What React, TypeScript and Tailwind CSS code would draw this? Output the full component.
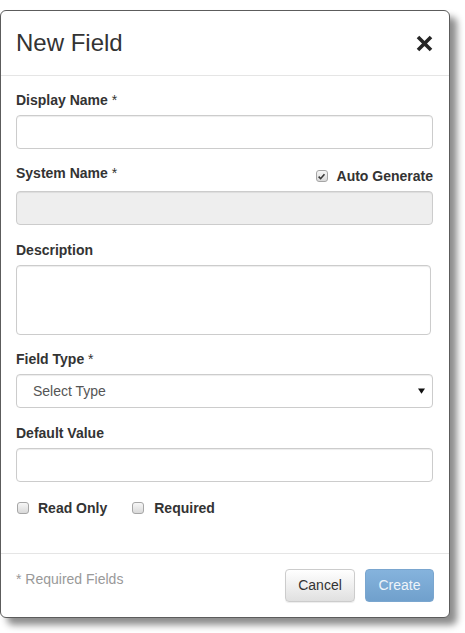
import React from "react";

const font = { fontFamily: '"Liberation Sans", Arial, sans-serif' };

function Box({ checked = false }: { checked?: boolean }) {
  return (
    <span className="relative inline-flex h-[12px] w-[12px] shrink-0 items-center justify-center rounded-[3px] border border-[#a6a6a6] bg-gradient-to-b from-[#f7f7f7] to-[#d9d9d9]">
      {checked && (
        <svg viewBox="0 0 10 10" className="h-[9px] w-[9px]">
          <path d="M1.8 5.2 L4 7.4 L8.3 2.4" fill="none" stroke="#3a3a3a" strokeWidth="1.8" />
        </svg>
      )}
    </span>
  );
}

function Label({ children, required = false }: { children: React.ReactNode; required?: boolean }) {
  return (
    <div className="mb-[5px] h-[20px] text-[14px] leading-[20px] font-bold text-[#333]">
      {children}
      {required && <span className="font-normal"> *</span>}
    </div>
  );
}

const inputBase =
  "block h-[34px] w-full rounded-[4px] border border-[#ccc] shadow-[inset_0_1px_1px_rgba(0,0,0,0.075)]";

export default function App() {
  return (
    <main className="min-h-screen bg-white pt-[10px]" style={font}>
      <div className="w-[450px] overflow-hidden rounded-[6px] border border-[#5c5c5c] bg-white shadow-[7px_7px_7px_rgba(0,0,0,0.45)]">
        {/* header */}
        <div className="flex h-[65px] items-center justify-between border-b border-[#e5e5e5] pr-[15px] pl-[15px]">
          <h1 className="text-[24px] leading-none text-[#333]">New Field</h1>
          <button className="flex h-[20px] w-[20px] items-center justify-center" aria-label="Close">
            <svg viewBox="0 0 17 17" className="h-[17px] w-[17px]">
              <path d="M2 2 L15 15 M15 2 L2 15" stroke="#262626" strokeWidth="3.6" />
            </svg>
          </button>
        </div>

        {/* body */}
        <div className="pt-[14px] pr-[16px] pb-[34px] pl-[15px] text-[#333]">
          <div className="mb-[15px]">
            <Label required>Display Name</Label>
            <input className={inputBase + " bg-white"} />
          </div>

          <div className="mb-[15px]">
            <div className="mb-[5px] flex h-[22px] items-start justify-between">
              <div className="h-[20px] text-[14px] leading-[18px] font-bold">
                System Name<span className="font-normal"> *</span>
              </div>
              <label className="mt-[3px] flex items-center gap-[9px] text-[14px] leading-[18px] font-bold">
                <Box checked />
                Auto Generate
              </label>
            </div>
            <input disabled className={inputBase + " bg-[#eeeeee]"} />
          </div>

          <div className="mb-[14px]">
            <Label>Description</Label>
            <textarea className="block h-[70px] w-[415px] resize-none rounded-[4px] border border-[#ccc] bg-white shadow-[inset_0_1px_1px_rgba(0,0,0,0.075)]" />
          </div>

          <div className="mb-[15px]">
            <Label required>Field Type</Label>
            <div className={inputBase + " flex items-center justify-between bg-white pr-[7px] pl-[16px]"}>
              <span className="text-[14px] text-[#555]">Select Type</span>
              <svg viewBox="0 0 8 6" className="h-[6px] w-[7px]">
                <path d="M0 0 H8 L4 6 Z" fill="#111" />
              </svg>
            </div>
          </div>

          <div className="mb-[15px]">
            <Label>Default Value</Label>
            <input className={inputBase + " bg-white"} />
          </div>

          <div className="flex h-[22px] items-center pl-[1px] text-[14px] font-bold">
            <label className="flex items-center gap-[9px]">
              <Box />
              Read Only
            </label>
            <label className="ml-[25px] flex items-center gap-[10px]">
              <Box />
              Required
            </label>
          </div>
        </div>

        {/* footer */}
        <div className="flex items-start justify-between border-t border-[#e5e5e5] pt-[15px] pr-[15px] pb-[15px] pl-[15px]">
          <span className="text-[14px] leading-[20px] text-[#999]">* Required Fields</span>
          <div className="flex gap-[10px]">
            <button className="h-[33px] w-[70px] rounded-[4px] border border-[#ccc] bg-gradient-to-b from-white to-[#e0e0e0] text-[14px] text-[#333] shadow-[0_1px_1px_rgba(0,0,0,0.075)]">
              Cancel
            </button>
            <button className="h-[33px] w-[69px] rounded-[4px] border border-[#7aa6cf] bg-gradient-to-b from-[#85b3dd] to-[#70a0cc] text-[14px] text-[#eef4fa]">
              Create
            </button>
          </div>
        </div>
      </div>
    </main>
  );
}
